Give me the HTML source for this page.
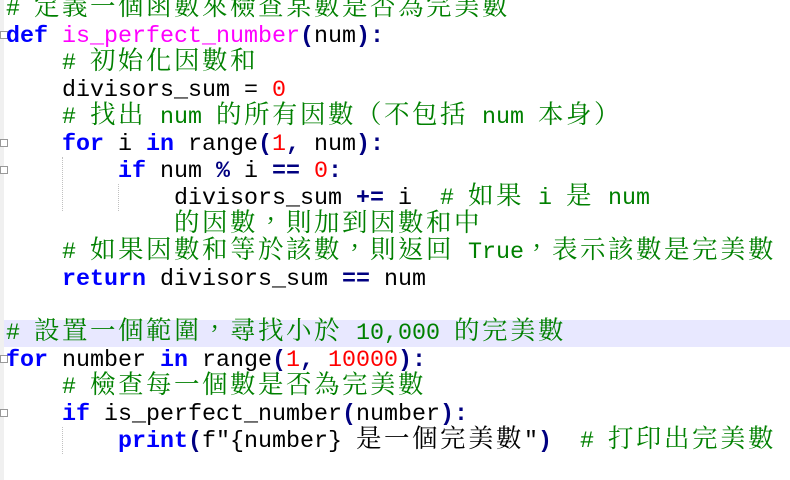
<!DOCTYPE html>
<html><head><meta charset="utf-8"><style>
body{margin:0;width:790px;height:480px;background:#fff;overflow:hidden;position:relative;font-family:"Liberation Mono","Noto Serif CJK SC",monospace;font-size:23.33px;}
.l{position:absolute;left:6px;height:27px;line-height:27px;white-space:pre;color:#000;}
.k{color:#0000ff;font-weight:bold}
.f{color:#ff00ff}
.g{color:#008000}
.n{color:#ff0000}
.o{color:#000080;font-weight:bold}
.c{font-size:25.5px;letter-spacing:2.5px;font-family:"Noto Serif CJK TC","Noto Serif CJK SC",serif;line-height:0;}
.hl{position:absolute;left:4px;right:0;top:320px;height:27px;background:#e8e8ff}
.m{position:absolute;left:0;top:0;width:4px;height:480px;background:#f0f0f0}
.fd{position:absolute;left:0;width:8px;height:8px;border:1px solid #999;box-sizing:border-box;background:#fff}
.ig{position:absolute;width:0;border-left:1px dotted #c0c0c0}
</style></head><body>
<div class="m"></div>
<div class="hl"></div>
<div class="fd" style="top:31px"></div>
<div class="fd" style="top:139px"></div>
<div class="fd" style="top:166px"></div>
<div class="fd" style="top:355px"></div>
<div class="fd" style="top:409px"></div>
<div class="ig" style="left:62px;top:157px;height:54px"></div>
<div class="ig" style="left:118px;top:184px;height:27px"></div>
<div class="ig" style="left:62px;top:427px;height:27px"></div>
<div class="l g" style="top:-3.5px"># <span class="c">定義一個函數來檢查某數是否為完美數</span></div>
<div class="l" style="top:23.5px"><span class="k">def</span> <span class="f">is_perfect_number</span><span class="o">(</span>num<span class="o">):</span></div>
<div class="l g" style="top:50.5px">    # <span class="c">初始化因數和</span></div>
<div class="l" style="top:77.5px">    divisors_sum = <span class="n">0</span></div>
<div class="l g" style="top:104.5px">    # <span class="c">找出</span> num <span class="c">的所有因數（不包括</span> num <span class="c">本身）</span></div>
<div class="l" style="top:131.5px">    <span class="k">for</span> i <span class="k">in</span> range<span class="o">(</span><span class="n">1</span><span class="o">,</span> num<span class="o">):</span></div>
<div class="l" style="top:158.5px">        <span class="k">if</span> num <span class="o">%</span> i <span class="o">==</span> <span class="n">0</span><span class="o">:</span></div>
<div class="l" style="top:185.5px">            divisors_sum <span class="o">+=</span> i  <span class="g"># <span class="c">如果</span> i <span class="c">是</span> num</span></div>
<div class="l g" style="top:212.5px">            <span class="c">的因數，則加到因數和中</span></div>
<div class="l g" style="top:239.5px">    # <span class="c">如果因數和等於該數，則返回</span> True<span class="c">，表示該數是完美數</span></div>
<div class="l" style="top:266.5px">    <span class="k">return</span> divisors_sum <span class="o">==</span> num</div>
<div class="l g" style="top:320.5px"># <span class="c">設置一個範圍，尋找小於</span> 10,000 <span class="c">的完美數</span></div>
<div class="l" style="top:347.5px"><span class="k">for</span> number <span class="k">in</span> range<span class="o">(</span><span class="n">1</span><span class="o">,</span> <span class="n">10000</span><span class="o">):</span></div>
<div class="l g" style="top:374.5px">    # <span class="c">檢查每一個數是否為完美數</span></div>
<div class="l" style="top:401.5px">    <span class="k">if</span> is_perfect_number<span class="o">(</span>number<span class="o">):</span></div>
<div class="l" style="top:428.5px">        <span class="k">print</span><span class="o">(</span>f"{number} <span class="c">是一個完美數</span>"<span class="o">)</span>  <span class="g"># <span class="c">打印出完美數</span></span></div>
</body></html>
